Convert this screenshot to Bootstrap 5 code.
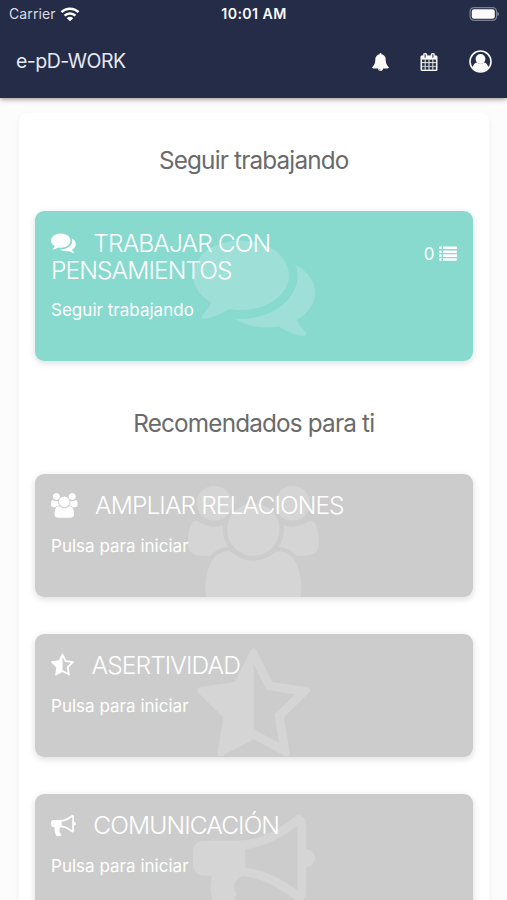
<!DOCTYPE html>
<html lang="es">
<head>
<meta charset="utf-8">
<meta name="viewport" content="width=device-width, initial-scale=1">
<title>e-pD-WORK</title>
<link href="https://cdn.jsdelivr.net/npm/bootstrap@5.3.0/dist/css/bootstrap.min.css" rel="stylesheet">
<style>
body{font-family:Inter,"Liberation Sans",sans-serif;background:#fcfcfc;height:900px;overflow:hidden;letter-spacing:0}
svg{fill:currentColor;display:block}
.app-top{background:#252c48;height:98px;box-shadow:0 1px 5px rgba(60,40,30,.55);color:#fbfaf8}
.status{height:28px;font-size:14px;line-height:28px;padding:0 8px 0 9px}
.status>div{flex:1 1 0}
.status .clock{font-weight:600;font-size:14.2px;letter-spacing:.4px}
.carrier{color:#d9dce6;letter-spacing:.1px}
.app-bar{height:68px;padding:0 15.500px 0 16px}
.app-title{font-size:19.5px;color:#e6e9f2;letter-spacing:-.5px;margin-top:-1px}
.app-icons{gap:31.500px}
.app-icons svg:last-child{margin:-1px 0 0 -1px}
.panel{margin:15px 18.500px 0;padding:0 16px 0 16.500px;background:#fff;height:787px;border-radius:8px 8px 0 0;box-shadow:0 4px 8px rgba(0,0,0,.05)}
.section-title{font-size:24.3px;font-weight:400;color:#6a6a6a;line-height:30px;letter-spacing:-.83px;margin:0;padding:32px 0 36px}
.section-next{padding-top:10px}
.tile{height:123px;border:0;border-radius:9px;background:#ccc;color:#fff;padding:18px 16px;overflow:hidden}
.tile-shadow{border-radius:9px;box-shadow:0 2px 7px rgba(0,0,0,.14);margin-bottom:37px}
.tile.active-tile{height:150px;background:#88d9ce}
.tile h3{font-size:24.6px;font-weight:300;line-height:27px;margin:0 0 15px;letter-spacing:-.93px;position:relative}
.active-tile h3{padding-top:.6px;margin-bottom:14px}
.tile h3 svg{display:inline-block;height:24.800px;width:auto;vertical-align:-3.500px;margin-right:17.500px}
.tile p{font-size:17px;line-height:24px;margin:0;position:relative;letter-spacing:.02px}
.tile-text{width:270px}
.watermark{position:absolute;top:11.500px;left:0;width:100%;opacity:.19}
.watermark svg{height:122px;width:auto;margin:0 auto}
.count{font-size:17px;line-height:20px;padding-top:15px}
</style>
<script src="https://cdn.jsdelivr.net/npm/bootstrap@5.3.0/dist/js/bootstrap.bundle.min.js"></script>
</head>
<body>
<svg width="0" height="0" class="position-absolute" aria-hidden="true"><defs>
<path id="comments" d="M1408 768q0 139-94 257t-256.500 186.500-353.500 68.500q-86 0-176-16-124 88-278 128-36 9-86 16h-3q-11 0-20.500-8t-11.500-21q-1-3-1-6.500t.5-6.500 2-6l2.500-5 3.500-5.500 4-5 4.500-5 4-4.500q5-6 23-25t26-29.500 22.500-29 25-38.500 20.500-44q-124-72-195-177t-71-224q0-139 94-257t256.500-186.500 353.500-68.500 353.500 68.500 256.500 186.500 94 257zm384 256q0 120-71 224.500t-195 176.500q10 24 20.500 44t25 38.500 22.500 29 26 29.500 23 25q1 1 4 4.500t4.500 5 4 5 3.500 5.500l2.500 5 2 6 .5 6.500-1 6.500q-3 14-13 22t-22 7q-50-7-86-16-154-40-278-128-90 16-176 16-271 0-472-132 58 4 88 4 161 0 309-45t264-129q125-92 192-212t67-254q0-77-23-152 129 71 204 178t75 230z"/>
<path id="users" d="M593 896q-162 5-265 128h-134q-82 0-138-40.500t-56-118.500q0-353 124-353 6 0 43.500 21t97.500 42.500 119 21.500q67 0 133-23-5 37-5 66 0 139 81 256zm1071 637q0 120-73 189.500t-194 69.500h-874q-121 0-194-69.500t-73-189.500q0-53 3.500-103.500t14-109 26.500-108.500 43-97.500 62-81 85.500-53.500 111.500-20q10 0 43 21.500t73 48 107 48 135 21.500 135-21.500 107-48 73-48 43-21.500q61 0 111.500 20t85.500 53.500 62 81 43 97.500 26.500 108.500 14 109 3.500 103.500zm-1024-1277q0 106-75 181t-181 75-181-75-75-181 75-181 181-75 181 75 75 181zm704 384q0 159-112.500 271.500t-271.500 112.500-271.500-112.500-112.500-271.500 112.500-271.500 271.500-112.500 271.500 112.500 112.500 271.500zm576 225q0 78-56 118.500t-138 40.500h-134q-103-123-265-128 81-117 81-256 0-29-5-66 66 23 133 23 59 0 119-21.500t97.500-42.500 43.500-21q124 0 124 353zm-128-609q0 106-75 181t-181 75-181-75-75-181 75-181 181-75 181 75 75 181z"/>
<path id="star" d="M1250 957l257-250-356-52-66-10-30-60-159-322v963l59 31 318 168-60-355-12-66zm452-262l-363 354 86 500q5 33-6 51.500t-34 18.500q-17 0-40-12l-449-236-449 236q-23 12-40 12-23 0-34-18.500t-6-51.500l86-500-364-354q-32-32-23-59.500t54-34.500l502-73 225-455q20-41 49-41 28 0 49 41l225 455 502 73q45 7 54 34.500t-24 59.500z"/>
<path id="bullhorn" d="M1664 640q53 0 90.500 37.500t37.500 90.500-37.500 90.500-90.500 37.500v384q0 52-38 90t-90 38q-417-347-812-380-58 19-91 66t-31 100.500 40 92.500q-20 33-23 65.500t6 58 33.500 55 48 50 61.500 50.500q-29 58-111.500 83t-168.500 11.500-132-55.500q-7-23-29.500-87.500t-32-94.500-23-89-15-101 3.500-98.500 22-110.500h-122q-66 0-113-47t-47-113v-192q0-66 47-113t113-47h480q435 0 896-384 52 0 90 38t38 90v384zm-128 604v-954q-394 302-768 343v270q377 42 768 341z"/>
</defs></svg>

<header class="app-top position-relative">
  <div class="status d-flex align-items-center">
    <div class="d-flex align-items-center carrier"><span>Carrier</span>
      <svg class="ms-1" width="20" height="15" viewBox="0 0 20 15" style="color:#fff"><g fill="none" stroke="currentColor" stroke-width="2.500"><path d="M1.500 5.200a12 12 0 0 1 17 0"/><path d="M4.600 8.700a7.500 7.500 0 0 1 10.800 0"/></g><path d="M10 14.300L6.800 11.200a4.400 4.400 0 0 1 6.400 0z"/></svg>
    </div>
    <div class="clock text-center text-nowrap">10:01 AM</div>
    <div class="d-flex justify-content-end">
      <svg width="30" height="14" viewBox="0 0 30 14"><rect x="1.100" y=".6" width="26.500" height="12.800" rx="4" fill="none" stroke="#7b8094" stroke-width="1.200"/><rect x="2.800" y="2.300" width="23" height="9.400" rx="2.300"/><path d="M28.400 4.700q1.600.8 1.600 2.300t-1.600 2.300z" fill="#858a9c"/></svg>
    </div>
  </div>
  <nav class="app-bar d-flex align-items-center justify-content-between">
    <span class="app-title">e-pD-WORK</span>
    <div class="app-icons d-flex align-items-center">
      <svg width="17" height="18" viewBox="49 0 1694 1792"><path d="M912 1696q0-16-16-16-59 0-101.500-42.500t-42.500-101.500q0-16-16-16t-16 16q0 73 51.500 124.500t124.500 51.500q16 0 16-16zm816-288q0 52-38 90t-90 38h-448q0 106-75 181t-181 75-181-75-75-181h-448q-52 0-90-38t-38-90q50-42 91-88t85-119.500 74.500-158.500 50-206 19.500-260q0-152 117-282.500t307-158.500q-8-19-8-39 0-40 28-68t68-28 68 28 28 68q0 20-8 39 190 28 307 158.500t117 282.500q0 139 19.500 260t50 206 74.500 158.500 85 119.500 91 88z"/></svg>
      <svg width="18" height="18" viewBox="0 0 1792 1792"><path stroke="currentColor" stroke-width="26" d="M192 1664h288v-288h-288v288zm352 0h320v-288h-320v288zm-352-352h288v-320h-288v320zm352 0h320v-320h-320v320zm-352-384h288v-288h-288v288zm736 736h320v-288h-320v288zm-384-736h320v-288h-320v288zm768 736h288v-288h-288v288zm-384-352h320v-320h-320v320zm-352-864v-288q0-13-9.500-22.500t-22.500-9.500h-64q-13 0-22.500 9.500t-9.500 22.500v288q0 13 9.500 22.500t22.500 9.500h64q13 0 22.500-9.500t9.500-22.500zm736 864h288v-320h-288v320zm-384-384h320v-288h-320v288zm384 0h288v-288h-288v288zm32-480v-288q0-13-9.500-22.500t-22.500-9.500h-64q-13 0-22.500 9.500t-9.500 22.500v288q0 13 9.500 22.500t22.500 9.500h64q13 0 22.500-9.500t9.500-22.500zm384-64v1280q0 52-38 90t-90 38h-1408q-52 0-90-38t-38-90v-1280q0-52 38-90t90-38h128v-96q0-66 47-113t113-47h64q66 0 113 47t47 113v96h384v-96q0-66 47-113t113-47h64q66 0 113 47t47 113v96h128q52 0 90 38t38 90z"/></svg>
      <svg width="23" height="23" viewBox="0 0 23 23"><circle cx="11.500" cy="11.500" r="10.500" fill="none" stroke="currentColor" stroke-width="1.600"/><circle cx="11.500" cy="9" r="4.900"/><path d="M3.700 17.600c.6-3.300 2-5 4.200-5.200a5.300 5.300 0 0 0 7.200 0c2.200.2 3.600 1.900 4.200 5.200a9.800 9.800 0 0 1-15.600 0z"/></svg>
    </div>
  </nav>
</header>

<main class="panel">
  <h2 class="section-title text-center">Seguir trabajando</h2>
  <div class="tile-shadow">
    <div class="card tile active-tile">
      <div class="watermark"><svg viewBox="0 0 1792 1792"><use href="#comments"/></svg></div>
      <div class="d-flex justify-content-between">
        <div class="tile-text">
          <h3><svg viewBox="0 0 1792 1792"><use href="#comments"/></svg>TRABAJAR CON PENSAMIENTOS</h3>
          <p>Seguir trabajando</p>
        </div>
        <div class="count d-flex gap-1"><span>0</span>
          <svg width="18" height="20" viewBox="0 0 18 20"><path d="M0 2.500h2.600v2.600H0zM4 2.500h14v2.600H4zM0 6.400h2.600V9H0zM4 6.400h14V9H4zM0 10.300h2.600v2.600H0zM4 10.300h14v2.600H4zM0 14.200h2.600v2.600H0zM4 14.200h14v2.600H4z"/></svg>
        </div>
      </div>
    </div>
  </div>
  <h2 class="section-title section-next text-center">Recomendados para ti</h2>
  <div class="tile-shadow"><div class="card tile">
    <div class="watermark"><svg viewBox="0 0 1920 1792"><use href="#users"/></svg></div>
    <h3><svg viewBox="0 0 1920 1792"><use href="#users"/></svg>AMPLIAR RELACIONES</h3>
    <p>Pulsa para iniciar</p>
  </div></div>
  <div class="tile-shadow"><div class="card tile">
    <div class="watermark"><svg viewBox="64 0 1664 1792"><use href="#star"/></svg></div>
    <h3><svg viewBox="64 0 1664 1792"><use href="#star"/></svg>ASERTIVIDAD</h3>
    <p>Pulsa para iniciar</p>
  </div></div>
  <div class="tile-shadow mb-0"><div class="card tile">
    <div class="watermark"><svg viewBox="0 0 1792 1792"><use href="#bullhorn"/></svg></div>
    <h3><svg viewBox="0 0 1792 1792"><use href="#bullhorn"/></svg>COMUNICACIÓN</h3>
    <p>Pulsa para iniciar</p>
  </div></div>
</main>
</body>
</html>
